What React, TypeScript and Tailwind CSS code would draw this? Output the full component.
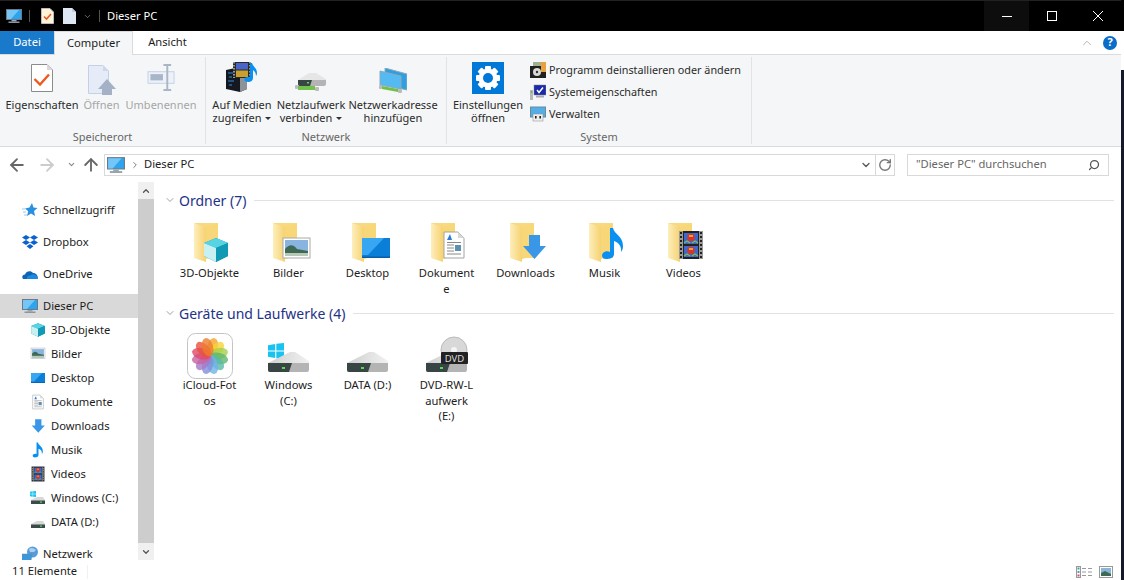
import type { ReactNode } from "react";
import { ArrowLeft, ArrowRight, ArrowUp, ChevronDown, ChevronRight, ChevronUp, RotateCw, Search } from "lucide-react";

const Folder = ({ children }: { children?: ReactNode }) => (
  <svg viewBox="0 0 48 48" className="w-12 h-12">
    <defs>
      <linearGradient id="fb" x1="0" x2="1" y1="0" y2="0">
        <stop offset="0" stopColor="#fdeebc" />
        <stop offset="1" stopColor="#f6d271" />
      </linearGradient>
    </defs>
    <rect x="8" y="5" width="24" height="35" fill="#f8d97f" />
    <path d="M8 5 L20 9 V44 L8 40 Z" fill="url(#fb)" />
    <path d="M20 9 L32 5 V38 L20 41 Z" fill="#f7d778" />
    {children}
  </svg>
);

const Cube = () => (
  <>
    <path d="M30 20 L42 25 V38 L30 44 L18 38 V25 Z" fill="#0c8fa8" />
    <path d="M30 20 L42 25 L30 30 L18 25 Z" fill="#57d4e4" />
    <path d="M18 25 L30 30 V44 L18 38 Z" fill="#c6f0f2" />
    <path d="M30 30 L42 25 V38 L30 44 Z" fill="#109ab4" />
  </>
);

const Photo = () => (
  <>
    <rect x="18" y="20" width="27" height="20" fill="#fff" stroke="#a9a9a9" />
    <rect x="20" y="22" width="23" height="16" fill="#8ab4e0" />
    <path d="M20 31 C25 25 29 27 32 31 L43 33 V38 H20 Z" fill="#3e6a55" />
    <rect x="20" y="35" width="23" height="3" fill="#b8c8b8" />
  </>
);

const Screen = () => (
  <>
    <rect x="18" y="20" width="28" height="20" fill="#0b7fd8" />
    <path d="M18 20 H40 L24 37 H18 Z" fill="#37a6f3" />
    <rect x="18" y="38.5" width="28" height="1.5" fill="#0a5ea6" />
  </>
);

const Doc = () => (
  <>
    <path d="M21 14 H35 L41 20 V40 H21 Z" fill="#fff" stroke="#a3a3a3" />
    <path d="M35 14 V20 H41 Z" fill="#d8d8d8" />
    <path d="M24 22 L27 16 L29 22 Z" fill="#2c7bd6" />
    <path d="M24 24.5 H38 M24 27 H31 M24 30 H31 M24 33 H31 M24 36 H38" stroke="#888" strokeWidth="1" />
    <rect x="32" y="27" width="6" height="6" fill="#5c8fb0" />
  </>
);

const DownArrow = () => <path d="M27 17 H38 V28 H44 L32.5 41 L21 28 H27 Z" fill="#3a96e6" />;

const Note = () => (
  <path d="M29 10 H32 C33 16 42 18 42 28 C42 31 41 33 40 34 C41 27 36 24 33 23 V36 C33 40 29 41 25 41 C21 41 20 37 22 35 C24 33 27 33 29 34 Z" fill="#0a90f0" />
);

const Film = () => (
  <>
    <rect x="19" y="13" width="24" height="28" fill="#222" />
    <path d="M21 13 V41 M41 13 V41" stroke="#9a9a9a" strokeWidth="4" />
    <path d="M21 14 V41 M41 14 V41" stroke="#222" strokeWidth="2" strokeDasharray="2 2" />
    <rect x="24" y="15" width="14" height="11" fill="#3f68cf" />
    <rect x="24" y="28" width="14" height="11" fill="#3f68cf" />
    <circle cx="31" cy="19.5" r="3.8" fill="#d8342c" />
    <circle cx="31" cy="32.5" r="3.8" fill="#d8342c" />
    <path d="M29 18 H33 M29 31 H33" stroke="#f2c62f" strokeWidth="1.5" />
    <path d="M24 25 L27 23 L30 25 M32 25 L35 23 L38 25 M24 38 L27 36 L30 38 M32 38 L35 36 L38 38" stroke="#7fc04a" strokeWidth="1.2" fill="none" />
  </>
);

const Drive = () => (
  <>
    <defs>
      <linearGradient id="dt" x1="0" x2="1" y1="0" y2="0">
        <stop offset="0" stopColor="#cfcfcf" />
        <stop offset="1" stopColor="#f1f1f1" />
      </linearGradient>
    </defs>
    <path d="M3 31 L25 20 H30 L44 29 V31 Z" fill="url(#dt)" />
    <path d="M3 31 H44 V38 Q44 40 42 40 H5 Q3 40 3 38 Z" fill="#b4b4b4" />
    <path d="M3 31 H27 L24 40 H5 Q3 40 3 38 Z" fill="#394545" />
    <rect x="17" y="35" width="3" height="2" fill="#4ee04e" />
  </>
);

const PhotosApp = () => {
  const colors = ["#f4a62a", "#f7d438", "#a5cf4e", "#5cb76a", "#5ab9a8", "#6fb4e8", "#7f8fdc", "#a678c8", "#c862a0", "#e0486a", "#e8503c", "#ee7c30"];
  return (
    <svg viewBox="0 0 48 48" className="w-12 h-12">
      <rect x="1.5" y="1.5" width="45" height="45" rx="8" fill="#fff" stroke="#c4c4c4" />
      {colors.map((c, i) => (
        <ellipse key={c} cx="24" cy="15" rx="5.5" ry="9.5" fill={c} opacity="0.8" transform={`rotate(${i * 30 + 15} 24 24)`} />
      ))}
    </svg>
  );
};

const IconBox = ({ children }: { children: ReactNode }) => (
  <svg viewBox="0 0 48 48" className="w-12 h-12">
    {children}
  </svg>
);

const WinLogo = ({ x = 3, y = 11, s = 16 }: { x?: number; y?: number; s?: number }) => (
  <g fill="#19c3f0">
    <path d={`M${x} ${y + s * 0.14} L${x + s * 0.45} ${y + s * 0.06} V${y + s * 0.47} H${x} Z`} />
    <path d={`M${x + s * 0.52} ${y + s * 0.05} L${x + s} ${y} V${y + s * 0.47} H${x + s * 0.52} Z`} />
    <path d={`M${x} ${y + s * 0.53} H${x + s * 0.45} V${y + s * 0.94} L${x} ${y + s * 0.86} Z`} />
    <path d={`M${x + s * 0.52} ${y + s * 0.53} H${x + s} V${y + s} L${x + s * 0.52} ${y + s * 0.95} Z`} />
  </g>
);

const Small = ({ children, box = "0 0 48 48" }: { children: ReactNode; box?: string }) => (
  <svg viewBox={box} className="w-4 h-4 shrink-0">
    {children}
  </svg>
);

const Monitor = ({ className }: { className: string }) => (
  <svg viewBox="0 0 16 16" className={className}>
    <rect x="0.5" y="1.5" width="15" height="10" fill="#2fa4ee" stroke="#6a7a88" />
    <path d="M1 2 H13 L5 11 H1 Z" fill="#74c6f6" />
    <rect x="5.5" y="12" width="5" height="1.5" fill="#9aa6b0" />
    <rect x="2.5" y="13.5" width="11" height="1.5" fill="#8a96a0" />
  </svg>
);

const QuickDoc = () => (
  <svg viewBox="0 0 13 16" className="w-[13px] h-[16px]">
    <path d="M0.5 0.5 H9 L12.5 4 V15.5 H0.5 Z" fill="#fff3d8" stroke="#bbb" />
    <path d="M3 8.5 L5.5 11 L10 6" stroke="#e8572a" strokeWidth="1.6" fill="none" />
  </svg>
);

const QuickBlank = () => (
  <svg viewBox="0 0 13 16" className="w-[13px] h-[16px]">
    <path d="M0 0 H9 L13 4 V16 H0 Z" fill="#dfe7f5" />
    <path d="M9 0 V4 H13 Z" fill="#c3cfe0" />
  </svg>
);

const Props = () => (
  <svg viewBox="0 0 22 28" className="w-[22px] h-[28px]">
    <path d="M0.5 0.5 H16 L21.5 6 V27.5 H0.5 Z" fill="#fff" stroke="#8c8c8c" />
    <path d="M16 0.5 V6 H21.5 Z" fill="#d9d9d9" />
    <path d="M3.5 15 L9 20.5 L18 10.5" stroke="#f0591e" strokeWidth="2.4" fill="none" />
  </svg>
);

const OpenFile = () => (
  <svg viewBox="0 0 28 30" className="w-[28px] h-[30px] mt-[3px]">
    <path d="M0.5 0.5 H15 L20.5 6 V28.5 H0.5 Z" fill="#e6ecf7" stroke="#c3d0e6" />
    <path d="M15 0.5 V6 H20.5 Z" fill="#cfd8e8" />
    <path d="M19 14 L28 24 H24 V30 H14 V24 H10 Z" fill="#a5b2c6" />
  </svg>
);

const Rename = () => (
  <svg viewBox="0 0 30 28" className="w-[29px] h-[27px] -mt-px">
    <rect x="1" y="8" width="27" height="12" fill="#eef2f8" stroke="#c3d0e6" />
    <rect x="3.5" y="10.5" width="13" height="6.5" fill="#a8b6ca" />
    <path d="M17 1 H25 M17 27 H25 M21 1 V27" stroke="#aab6c6" strokeWidth="2" fill="none" />
  </svg>
);

const Media = () => (
  <svg viewBox="0 0 32 30" className="w-[32px] h-[30px] -mt-[2px]">
    <path d="M0 8 L14 5 L21 8 V27 L14 30 L0 27 Z" fill="#15191f" />
    <path d="M14 5 L21 8 V27 L14 30 Z" fill="#8d9198" />
    <path d="M2 11 H8 M3 15 H6 M2 19 H8 M3 23 H6" stroke="#2b8fe8" strokeWidth="1" />
    <rect x="7" y="0" width="18" height="16" fill="#2a2a2a" />
    <path d="M8 0 V16 M24 0 V16" stroke="#bbb" strokeWidth="1.5" strokeDasharray="1.5 1.5" />
    <rect x="10" y="1" width="12" height="6.5" fill="#4766c8" />
    <rect x="10" y="8.5" width="12" height="6.5" fill="#c8a030" />
    <path d="M24 1 H26 C27 5 31 6 31 11 C31 13 30 14 30 14 C30 10 28 9 27 8 V16 C27 20 22 21 19 19 C17 17 20 14 24 15 Z" fill="#0a90f0" />
  </svg>
);

const NetDrive = () => (
  <svg viewBox="0 0 32 20" className="w-[32px] h-[20px] mt-[9px]">
    <path d="M3 7 L14 0 H21 L31 6 V7 Z" fill="#e6e6e6" />
    <path d="M3 7 H31 V11 Q31 13 29 13 H5 Q3 13 3 11 Z" fill="#b4b4b4" />
    <path d="M3 7 H17 L15 13 H5 Q3 13 3 11 Z" fill="#394545" />
    <rect x="12" y="9" width="2" height="1.5" fill="#4ee04e" />
    <rect x="3" y="13" width="17" height="4" fill="#72c04e" />
    <rect x="0" y="12" width="3" height="4" rx="1" fill="#bbb" />
    <rect x="20" y="14" width="4" height="4" rx="1" fill="#bbb" />
  </svg>
);

const NetAddress = () => (
  <svg viewBox="0 0 28 25" className="w-[28px] h-[25px] mt-[4px]">
    <path d="M6 0 L28 6 V22 L6 17 Z" fill="#2f9fe0" stroke="#8caabb" />
    <path d="M1 3 L22 8 V21 L1 17 Z" fill="#55b9f2" stroke="#8caabb" />
    <path d="M3 18 L19 21 V24 L3 21 Z" fill="#6fc14c" />
    <rect x="0" y="17" width="3" height="4" rx="1" fill="#bbb" />
    <rect x="19" y="21" width="4" height="4" rx="1" fill="#bbb" />
  </svg>
);

const Gear = () => (
  <svg viewBox="0 0 32 32" className="w-8 h-8">
    <rect width="32" height="32" fill="#0078d7" />
    <g fill="#fff">
      {[0, 45, 90, 135].map((a) => (
        <rect key={a} x="13" y="4" width="6" height="24" rx="1" transform={`rotate(${a} 16 16)`} />
      ))}
      <circle cx="16" cy="16" r="9.5" />
    </g>
    <circle cx="16" cy="16" r="5" fill="#0078d7" />
  </svg>
);

const SmallUninstall = () => (
  <svg viewBox="0 0 16 16" className="w-4 h-4 shrink-0">
    <rect x="0" y="4" width="16" height="12" fill="#202020" />
    <rect x="3" y="0" width="13" height="4" fill="#a0b090" />
    <rect x="11" y="0" width="5" height="10" fill="#e8a040" />
    <circle cx="7" cy="10" r="4" fill="#d8d8d8" />
    <circle cx="7" cy="10" r="1.2" fill="#333" />
  </svg>
);

const SmallSystem = () => (
  <svg viewBox="0 0 16 16" className="w-4 h-4 shrink-0">
    <rect x="0" y="6" width="3" height="10" fill="#b8b8b8" />
    <rect x="0.8" y="7" width="1.4" height="2" fill="#5cc04a" />
    <rect x="4" y="1" width="12" height="10" fill="#1a2aa8" stroke="#888" strokeWidth="0.5" />
    <path d="M7 6 L9 8.5 L13 3.5" stroke="#fff" strokeWidth="1.5" fill="none" />
    <rect x="6" y="11.5" width="8" height="2" fill="#aaa" />
  </svg>
);

const SmallManage = () => (
  <svg viewBox="0 0 16 16" className="w-4 h-4 shrink-0">
    <rect x="0.5" y="1" width="15" height="10" fill="#53aee8" stroke="#6a8aa0" />
    <rect x="3" y="8" width="10" height="7" fill="#eee" stroke="#888" strokeWidth="0.5" />
    <rect x="5" y="10" width="1.6" height="2.5" fill="#222" />
    <rect x="9.4" y="10" width="1.6" height="2.5" fill="#222" />
  </svg>
);

const Star = () => (
  <Small box="0 0 16 16">
    <path d="M10 1 L11.5 5.5 L15.5 6 L12 9 L13 14 L9 11.5 L5 14 L6.2 9.2 L3 6.5 L7.5 5.6 Z" fill="#2b8fe0" />
    <path d="M0 7 H3 M1 10 H4 M2 13 H5" stroke="#9cc8ec" strokeWidth="1" />
  </Small>
);

const Dropbox = () => (
  <Small box="0 0 16 16">
    <path d="M4 1 L8 3.5 L4 6 L0 3.5 Z M12 1 L16 3.5 L12 6 L8 3.5 Z M4 6 L8 8.5 L4 11 L0 8.5 Z M12 6 L16 8.5 L12 11 L8 8.5 Z M8 10 L11.5 12.2 L8 15 L4.5 12.2 Z" fill="#0a62d0" />
  </Small>
);

const Cloud = () => (
  <Small box="0 0 16 16">
    <path d="M1 13 C-0.5 11 0.5 8.5 3 8.5 C4 5 9 4 11 7 C14 7 16.5 9.5 15.5 13 Z" fill="#0f65b4" />
    <path d="M5 13 C4.5 10.5 6.5 9 8.5 9.5 C10 7.5 14 8 15 10.5 C16 11.5 16 12.5 15.5 13 Z" fill="#1a8ae0" />
  </Small>
);

const Network = () => (
  <Small box="0 0 16 16">
    <circle cx="10.5" cy="6" r="5.5" fill="#5a9ad8" />
    <path d="M7 3 C9 1 12 2 14 4 L12 6 L8 6 Z" fill="#a8d0f0" />
    <path d="M0 8 H10 L9 15 H0 Z" fill="#3a98dc" stroke="#6a8aa0" strokeWidth="0.5" />
  </Small>
);

const SmallDrive = ({ win = false }: { win?: boolean }) => (
  <Small box="0 0 16 16">
    {win && <WinLogo x={0} y={1} s={6} />}
    <path d="M1 10 L7 7 H13 L15 10 V14 H1 Z" fill="#d8d8d8" />
    <rect x="1" y="10.5" width="14" height="3.5" fill="#3d4a4a" />
    <rect x="10" y="11.5" width="2" height="1.2" fill="#4ee04e" />
  </Small>
);

const SideRow = ({ icon, label, child, selected }: { icon: ReactNode; label: string; child?: boolean; selected?: boolean }) => (
  <div className={`h-6 shrink-0 flex items-center gap-[5px] ${child ? "pl-[30px]" : "pl-[22px]"} ${selected ? "bg-[#d9d9d9]" : ""}`}>
    {icon}
    <span className="whitespace-nowrap">{label}</span>
  </div>
);

const Item = ({ icon, label, h = "h-[47px]" }: { icon: ReactNode; label: string; h?: string }) => (
  <div className="w-[79px] flex flex-col items-center">
    <div className={`${h} flex items-start justify-center`}>{icon}</div>
    <div className="text-center leading-[15.5px] whitespace-pre">{label}</div>
  </div>
);

const GroupHead = ({ label }: { label: string }) => (
  <div className="h-6 flex items-center">
    <ChevronDown className="w-[12px] h-[12px] ml-[9px] text-[#808080]" strokeWidth={1.5} />
    <span className="ml-[3px] text-[14px] text-[#1e3287] whitespace-nowrap">{label}</span>
    <div className="ml-2 flex-1 h-px bg-[#e2e2e2]" />
  </div>
);

const RibbonBtn = ({ w, icon, lines, off }: { w: string; icon: ReactNode; lines: ReactNode; off?: boolean }) => (
  <div className={`${w} flex flex-col items-center`}>
    <div className="h-[40px] flex items-center justify-center">{icon}</div>
    <div className={`text-center text-[11px] leading-[13px] whitespace-nowrap ${off ? "text-[#a6a6a6]" : "text-[#2b2b2b]"}`}>{lines}</div>
  </div>
);

const Caret = () => <span className="inline-block ml-[4px] mb-[2px] w-0 h-0 border-x-[3px] border-x-transparent border-t-[3px] border-t-[#333]" />;

function Section({ w, label, children }: { w: string; label: string; children: ReactNode }) {
  return (
    <div className={`${w} border-r border-[#e2e3e4] my-[2px] flex flex-col shrink-0`}>
      <div className="flex-1 flex pt-[1px]">{children}</div>
      <div className="h-[17px] text-center text-[11px] text-[#666] leading-[20px]">{label}</div>
    </div>
  );
}

export default function App() {
  return (
    <div className="w-[1124px] h-[580px] flex bg-white text-[11.2px] text-[#1c1c1c] overflow-hidden font-['Noto_Sans',sans-serif]">
      <div className="w-[1121px] flex flex-col">
        <div className="h-[31px] shrink-0 bg-black border-t border-t-[#222] flex items-center text-white">
          <div className="ml-[6px]"><Monitor className="w-4 h-4" /></div>
          <div className="ml-[7px] w-px h-3 bg-[#555]" />
          <div className="ml-[11px] flex"><QuickDoc /></div>
          <div className="ml-[9px] flex"><QuickBlank /></div>
          <ChevronDown className="ml-[7px] w-[9px] h-[9px] text-[#888]" />
          <div className="ml-[7px] w-px h-3 bg-[#555]" />
          <span className="ml-[7px]">Dieser PC</span>
          <div className="ml-auto flex h-full">
            <div className="w-[45px] bg-[#0d0d0d] flex items-center justify-center"><div className="w-[10px] h-px bg-white" /></div>
            <div className="w-[46px] flex items-center justify-center"><div className="w-[10px] h-[10px] border border-white" /></div>
            <div className="w-[46px] flex items-center justify-center">
              <svg viewBox="0 0 10 10" className="w-[10px] h-[10px]"><path d="M0 0 L10 10 M10 0 L0 10" stroke="#fff" strokeWidth="1" /></svg>
            </div>
          </div>
        </div>

        <div className="h-[23px] shrink-0 flex items-stretch">
          <div className="w-[54px] bg-[#1979ca] text-white flex items-center justify-center">Datei</div>
          <div className="w-[79px] bg-[#f5f6f7] border-x border-t border-[#dadbdc] flex items-center justify-center relative z-10 -mb-px">Computer</div>
          <div className="w-[69px] flex items-center justify-center">Ansicht</div>
          <div className="ml-auto flex items-center mr-[4px] gap-[9px]">
            <ChevronUp className="w-[14px] h-[14px] text-[#aaa]" strokeWidth={1.5} />
            <div className="w-[14px] h-[14px] rounded-full bg-[#0a6cc8] text-white text-[11px] font-bold flex items-center justify-center">?</div>
          </div>
        </div>

        <div className="h-[93px] shrink-0 bg-[#f5f6f7] border-y border-[#dadbdc] flex">
          <Section w="w-[206px]" label="Speicherort">
            <div className="w-[3px]" />
            <RibbonBtn w="w-[78px]" icon={<Props />} lines="Eigenschaften" />
            <RibbonBtn w="w-[41px]" icon={<OpenFile />} lines="Öffnen" off />
            <RibbonBtn w="w-[78px]" icon={<Rename />} lines="Umbenennen" off />
          </Section>
          <Section w="w-[241px]" label="Netzwerk">
            <div className="w-[4px]" />
            <RibbonBtn w="w-[64px]" icon={<Media />} lines={<>Auf Medien<br />zugreifen<Caret /></>} />
            <RibbonBtn w="w-[74px]" icon={<NetDrive />} lines={<>Netzlaufwerk<br />verbinden<Caret /></>} />
            <RibbonBtn w="w-[90px]" icon={<NetAddress />} lines={<>Netzwerkadresse<br />hinzufügen</>} />
          </Section>
          <Section w="w-[305px]" label="System">
            <div className="w-[3px]" />
            <RibbonBtn w="w-[76px]" icon={<Gear />} lines={<>Einstellungen<br />öffnen</>} />
            <div className="ml-[4px] pt-[1px] flex flex-col whitespace-nowrap text-[10.8px] text-[#2b2b2b]">
              <div className="h-[22px] flex items-center gap-[3px]"><SmallUninstall />Programm deinstallieren oder ändern</div>
              <div className="h-[22px] flex items-center gap-[3px]"><SmallSystem />Systemeigenschaften</div>
              <div className="h-[22px] flex items-center gap-[3px]"><SmallManage />Verwalten</div>
            </div>
          </Section>
        </div>

        <div className="h-[35px] shrink-0 flex items-center">
          <ArrowLeft className="ml-[7px] w-5 h-5 text-[#666]" strokeWidth={2.2} />
          <ArrowRight className="ml-[10px] w-5 h-5 text-[#ccc]" strokeWidth={2.2} />
          <ChevronDown className="ml-[10px] w-[9px] h-[9px] text-[#888]" strokeWidth={3} />
          <ArrowUp className="ml-[5px] w-5 h-5 text-[#666]" strokeWidth={2.2} />
          <div className="ml-[3px] w-[791px] h-[22px] border border-[#d9d9d9] flex items-center">
            <Monitor className="ml-[2px] w-[18px] h-[18px]" />
            <ChevronRight className="ml-[5px] w-[10px] h-[10px] text-[#666]" strokeWidth={2} />
            <span className="ml-[4px]">Dieser PC</span>
            <ChevronDown className="ml-auto mr-[3px] w-[12px] h-[12px] text-[#555]" strokeWidth={2.5} />
            <div className="w-px h-full bg-[#d9d9d9]" />
            <RotateCw className="mx-[2px] w-[14px] h-[14px] text-[#777]" strokeWidth={2.4} />
          </div>
          <div className="ml-[12px] w-[202px] h-[22px] border border-[#d9d9d9] flex items-center text-[#666] pl-[8px]">
            "Dieser PC" durchsuchen
            <Search className="ml-auto mr-[8px] w-[12px] h-[12px] -scale-x-100 text-[#555]" strokeWidth={2.5} />
          </div>
        </div>

        <div className="flex-1 flex min-h-0">
          <div className="w-[138px] pt-[16px] flex flex-col shrink-0 overflow-hidden">
            <SideRow icon={<Star />} label="Schnellzugriff" />
            <div className="h-2 shrink-0" />
            <SideRow icon={<Dropbox />} label="Dropbox" />
            <div className="h-2 shrink-0" />
            <SideRow icon={<Cloud />} label="OneDrive" />
            <div className="h-2 shrink-0" />
            <SideRow icon={<Monitor className="w-4 h-4 shrink-0" />} label="Dieser PC" selected />
            <SideRow child icon={<Small box="16 18 28 28"><Cube /></Small>} label="3D-Objekte" />
            <SideRow child icon={<Small box="16 16 31 31"><Photo /></Small>} label="Bilder" />
            <SideRow child icon={<Small box="16 14 32 32"><Screen /></Small>} label="Desktop" />
            <SideRow child icon={<Small box="16 12 30 30"><Doc /></Small>} label="Dokumente" />
            <SideRow child icon={<Small box="18 15 28 28"><DownArrow /></Small>} label="Downloads" />
            <SideRow child icon={<Small box="16 9 32 33"><Note /></Small>} label="Musik" />
            <SideRow child icon={<Small box="17 12 28 30"><Film /></Small>} label="Videos" />
            <SideRow child icon={<SmallDrive win />} label="Windows (C:)" />
            <SideRow child icon={<SmallDrive />} label="DATA (D:)" />
            <div className="h-2 shrink-0" />
            <SideRow icon={<Network />} label="Netzwerk" />
          </div>

          <div className="w-[16px] bg-[#cdcdcd] flex flex-col justify-between shrink-0">
            <div className="h-[17px] bg-[#f0f0f0] flex items-center justify-center"><ChevronUp className="w-[10px] h-[10px] text-[#555]" strokeWidth={3} /></div>
            <div className="h-[17px] bg-[#f0f0f0] flex items-center justify-center"><ChevronDown className="w-[10px] h-[10px] text-[#555]" strokeWidth={3} /></div>
          </div>

          <div className="flex-1 pl-[1px] pr-[7px] pt-[6px]">
            <GroupHead label="Ordner (7)" />
            <div className="flex pl-[15px] pt-[6px] h-[89px]">
              <Item label="3D-Objekte" icon={<Folder><Cube /></Folder>} />
              <Item label="Bilder" icon={<Folder><Photo /></Folder>} />
              <Item label="Desktop" icon={<Folder><Screen /></Folder>} />
              <Item label={"Dokument\ne"} icon={<Folder><Doc /></Folder>} />
              <Item label="Downloads" icon={<Folder><DownArrow /></Folder>} />
              <Item label="Musik" icon={<Folder><Note /></Folder>} />
              <Item label="Videos" icon={<Folder><Film /></Folder>} />
            </div>
            <GroupHead label="Geräte und Laufwerke (4)" />
            <div className="flex pl-[15px] pt-[7px]">
              <Item h="h-[45px]" label={"iCloud-Fot\nos"} icon={<PhotosApp />} />
              <Item h="h-[45px]" label={"Windows\n(C:)"} icon={<IconBox><WinLogo /><Drive /></IconBox>} />
              <Item h="h-[45px]" label="DATA (D:)" icon={<IconBox><Drive /></IconBox>} />
              <Item h="h-[45px]" label={"DVD-RW-L\naufwerk\n(E:)"} icon={<IconBox><Drive /><circle cx="31" cy="18" r="13" fill="#d8d8d8" stroke="#bbb" /><circle cx="31" cy="18" r="3" fill="#f4f4f4" /><rect x="18" y="20" width="27" height="12" rx="1" fill="#222" /><text x="31.5" y="30" fontSize="9.5" fill="#ddd" textAnchor="middle">DVD</text></IconBox>} />
            </div>
          </div>
        </div>

        <div className="h-[20px] shrink-0 flex items-center pl-[12px] pr-[8px] pt-[3px]">
          <span>11 Elemente</span>
          <div className="ml-[10px] w-px h-[14px] bg-[#f0f0f0]" />
          <div className="ml-auto flex items-center gap-[7px]">
            <svg viewBox="0 0 16 12" className="w-4 h-[12px]">
              <rect x="0.5" y="0.5" width="4" height="11" fill="#fff" stroke="#999" />
              <rect x="1.5" y="1.5" width="2" height="2" fill="#4a9a8a" />
              <rect x="1.5" y="5" width="2" height="2" fill="#4a9ae0" />
              <rect x="1.5" y="8.5" width="2" height="2" fill="#e04a4a" />
              <path d="M6 2.5 H10 M12 2.5 H16 M6 6 H10 M12 6 H16 M6 9.5 H10 M12 9.5 H16" stroke="#999" />
            </svg>
            <svg viewBox="0 0 14 12" className="w-[14px] h-[12px]">
              <rect x="0.5" y="0.5" width="13" height="11" fill="#fff" stroke="#999" />
              <rect x="2" y="2" width="10" height="8" fill="#8ab4d8" />
              <path d="M2 7 L6 5 L12 8 V10 H2 Z" fill="#3e6a55" />
            </svg>
          </div>
        </div>
      </div>

      <div className="w-[3px] flex flex-col">
        <div className="h-[31px] bg-black" />
        <div className="h-[39px] bg-white" />
        <div className="flex-1 bg-[#15192a]" />
      </div>
    </div>
  );
}
